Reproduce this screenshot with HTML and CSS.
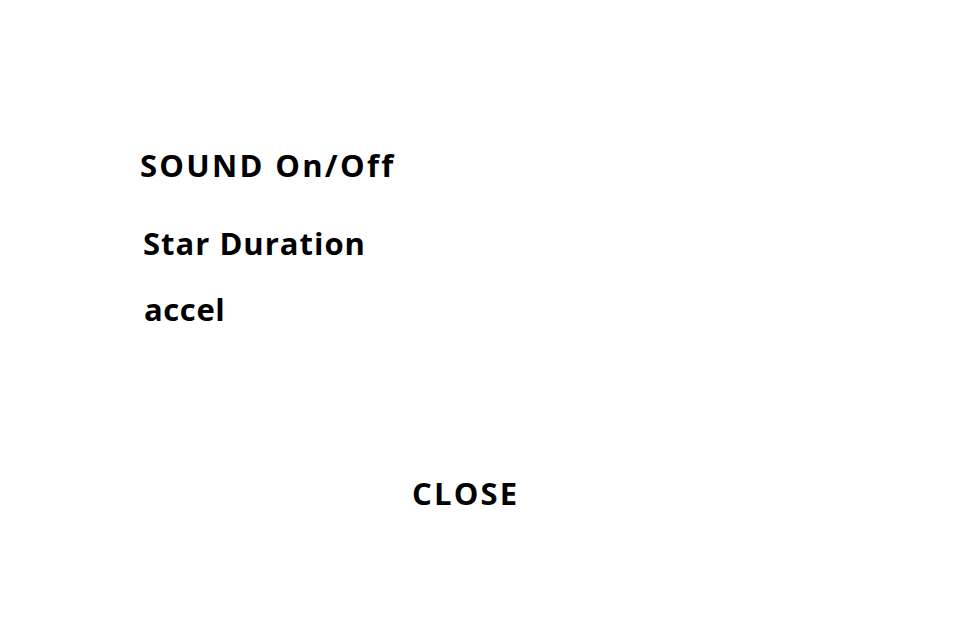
FILE: index.html
```html
<!DOCTYPE html>
<html>
<head>
<meta charset="utf-8">
<link rel="stylesheet" href="styles.css">
</head>
<body>
<div class="page">
  <div class="options">
    <div class="opt opt-sound">SOUND On/Off</div>
    <div class="opt opt-star">Star Duration</div>
    <div class="opt opt-accel">accel</div>
  </div>
  <div class="close">CLOSE</div>
</div>
</body>
</html>
```
FILE: styles.css
```css
html, body {
  margin: 0;
  padding: 0;
  background: #fff;
}
.page {
  width: 960px;
  height: 640px;
  font-family: "Open Sans", "Noto Sans", sans-serif;
  font-weight: 700;
  color: #000;
  display: flex;
  flex-direction: column;
}
.options {
  padding: 140px 0 0 140px;
  display: flex;
  flex-direction: column;
}
.opt {
  font-size: 31px;
  line-height: 50px;
}
.opt-sound {
  letter-spacing: 2.3px;
}
.opt-star {
  margin-top: 28px;
  padding-left: 3px;
  letter-spacing: 1px;
}
.opt-accel {
  margin-top: 16px;
  padding-left: 4px;
  letter-spacing: 0.6px;
}
.close {
  margin-top: 134px;
  padding-left: 412px;
  font-size: 31px;
  line-height: 50px;
  letter-spacing: 2.2px;
}
```
